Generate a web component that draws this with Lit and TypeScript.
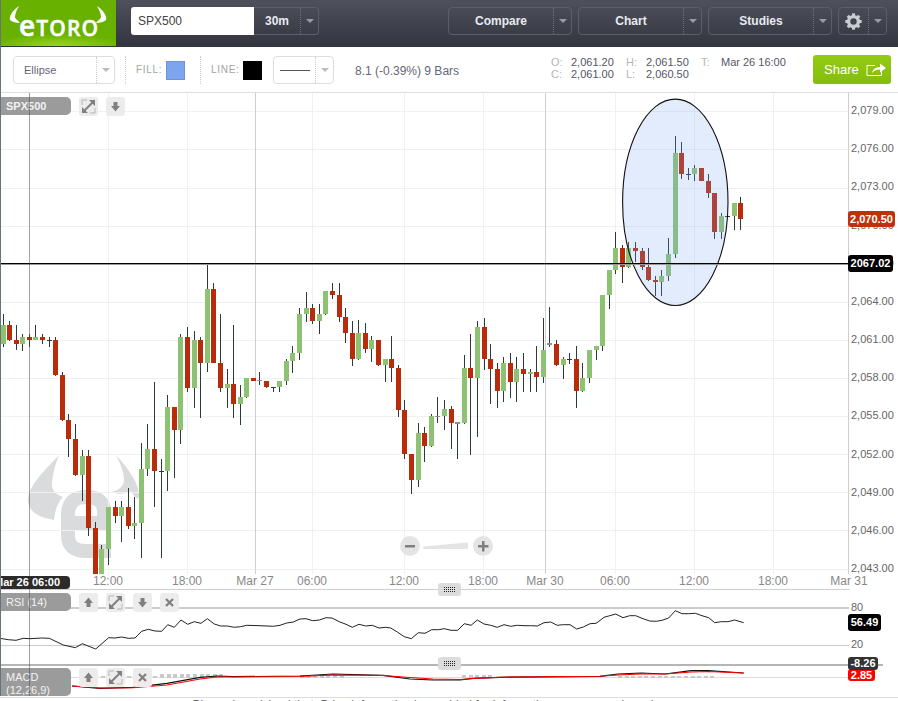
import { LitElement, html, css, svg } from "lit";
import { customElement } from "lit/decorators.js";

type C = [number, number, number, number, number, string];
const z7: C[] = [[10,163,260,195,251,"u"],[28,183,242,195,240,"d"],[49,195,269,240,251,"d"],[67,222,272,231,251,"u"],[88,222,261,231,240,"d"],[106,195,240,231,240,"u"],[127,222,252,231,240,"d"],[148,231,260,240,242,"n"],[166,231,347,240,345,"d"],[187,337,482,345,480,"d"],[205,462,590,480,537,"d"],[226,492,647,537,645,"d"],[247,569,722,588,645,"u"],[265,569,827,588,804,"d"],[286,786,942,804,942,"d"],[304,855,942,867,942,"u"],[325,741,915,741,867,"u"],[346,722,789,741,768,"d"],[364,722,846,741,768,"u"],[385,684,806,741,798,"d"],[403,711,837,789,798,"u"],[424,549,895,627,789,"u"],[442,492,648,567,627,"u"],[463,366,742,567,633,"d"],[484,597,895,633,635,"n"],[502,405,692,441,633,"u"],[523,441,654,441,510,"d"],[541,222,552,231,510,"u"],[562,201,395,231,384,"d"],[583,213,444,240,384,"u"],[601,231,474,240,309,"d"],[622,12,337,87,309,"u"],[640,69,310,87,309,"d"],[661,163,395,309,384,"d"],[682,327,444,372,384,"u"],[700,195,474,372,432,"d"],[721,375,495,411,432,"u"],[739,354,413,354,411,"u"],[760,354,364,354,363,"d"],[778,336,375,361,364,"g"],[799,363,384,363,381,"d"],[820,381,396,381,384,"n"],[838,363,396,363,381,"u"],[859,297,375,303,363,"u"],[877,258,338,279,303,"u"],[898,144,300,162,279,"u"]];
const z8: C[] = [[19,96,186,144,162,"u"],[37,132,192,144,183,"d"],[58,132,222,162,183,"u"],[76,93,165,93,162,"u"],[97,69,117,93,105,"d"],[118,69,186,105,171,"d"],[136,144,249,171,219,"d"],[157,183,318,219,297,"d"],[175,180,300,219,297,"u"],[196,189,279,219,267,"d"],[214,228,306,240,267,"u"],[235,240,318,240,315,"d"],[256,297,365,297,315,"u"],[274,228,365,297,324,"d"],[295,316,471,324,450,"d"],[313,420,597,450,582,"d"],[334,582,702,582,660,"d"],[355,489,681,519,660,"u"],[373,501,606,519,558,"d"],[394,462,560,468,558,"u"],[412,411,490,468,471,"g"],[433,420,510,447,468,"u"],[454,438,567,447,489,"d"],[472,486,597,486,492,"g"],[493,285,491,324,489,"u"],[511,222,585,324,354,"d"],[532,183,532,201,354,"u"],[553,175,330,201,297,"d"],[571,252,432,297,327,"d"],[592,309,444,327,393,"d"],[610,291,426,309,393,"u"],[631,280,414,309,366,"d"],[649,290,426,327,366,"u"],[670,279,396,327,342,"d"],[691,327,396,336,342,"u"],[709,259,396,336,351,"d"],[730,175,369,270,351,"u"],[748,141,261,250,254,"g"],[769,240,318,252,315,"d"],[790,291,357,297,315,"u"],[808,279,312,297,300,"n"],[829,259,444,297,393,"d"],[847,309,396,354,393,"u"],[868,270,369,270,354,"u"],[889,258,300,258,270,"u"],[907,105,273,105,258,"u"]];
const z6: C[] = [[28,540,657,540,615,"u"],[46,426,552,474,540,"u"],[67,465,579,474,531,"d"],[85,456,534,474,531,"u"],[106,456,516,474,483,"d"],[127,474,540,483,531,"d"],[145,474,573,531,570,"d"],[166,558,618,570,576,"d"],[184,540,618,558,576,"u"],[205,444,573,492,558,"u"],[226,138,504,189,492,"u"],[244,157,267,189,252,"d"],[265,234,270,252,255,"n"],[283,225,273,234,252,"u"],[304,234,273,234,273,"d"],[325,252,324,273,309,"d"],[343,309,447,309,426,"d"],[364,369,447,378,426,"u"],[382,375,381,378,381,"n"],[403,339,420,339,378,"u"],[421,321,420,339,387,"d"]];

const conv = (list: C[], ox: number, oy: number): C[] =>
  list.map(([x, a, b, c, d, t]) => [ox + x / 3, oy + a / 3, oy + b / 3, oy + c / 3, oy + d / 3, t] as C);
const candles: C[] = [...conv(z7, 0, 260), ...conv(z8, 300, 260), ...conv(z6, 600, 90)];
const bodyFill: Record<string, string> = { u: "#8dc273", d: "#b82c0c", n: "#2c3a3a", g: "#8a9090" };

const YS = Array.from({ length: 13 }, (_, i) => 111.3 + 38.1 * i);
const PRICES = ["2,079.00","2,076.00","2,073.00","2,070.00","2,067.00","2,064.00","2,061.00","2,058.00","2,055.00","2,052.00","2,049.00","2,046.00","2,043.00"];
const LIGHT_X = [108, 187, 312, 404, 483, 615, 694, 773];
const DARK_X = [255, 545];
const TIMES: [number, string][] = [[108,"12:00"],[187,"18:00"],[255,"Mar 27"],[312,"06:00"],[404,"12:00"],[483,"18:00"],[545,"Mar 30"],[615,"06:00"],[694,"12:00"],[773,"18:00"],[849,"Mar 31"]];

const pts = (list: number[][], ox: number, oy: number) => list.map(([x, y]) => `${(ox + x / 3).toFixed(1)},${(oy + y / 3).toFixed(1)}`).join(" ");
const rsi = [
  pts([[0,205],[25,209],[48,211],[70,205],[90,206],[125,204],[148,205],[190,225],[226,233],[247,221],[287,237],[326,203],[345,204],[365,201],[385,205],[405,204],[425,184],[445,178],[465,183],[485,184],[503,164],[523,172],[543,150],[563,163],[583,155],[603,160],[622,146],[643,162],[662,168],[682,168],[703,172],[722,170],[740,166],[780,167],[820,169],[840,166],[860,159],[880,156]], 0, 570),
  pts([[0,267],[18,266],[38,272],[58,270],[78,263],[96,264],[118,275],[138,283],[157,292],[177,283],[197,288],[217,286],[237,294],[257,292],[272,294],[293,307],[313,320],[334,326],[355,308],[375,310],[395,299],[415,299],[433,296],[453,301],[473,301],[493,281],[513,286],[532,270],[552,282],[572,286],[592,292],[612,284],[632,289],[652,286],[672,287],[692,287],[712,288],[732,278],[752,276],[772,286],[790,284],[810,284],[830,297],[850,291],[870,281],[888,280]], 300, 530),
  pts([[0,156],[18,142],[35,137],[53,132],[75,143],[95,137],[113,137],[135,146],[155,153],[175,154],[192,151],[212,144],[232,122],[252,131],[272,131],[292,130],[312,137],[332,143],[350,158],[370,155],[390,155],[410,150],[437,158]], 598, 570),
].join(" ");
const macdBlack = "72,686 100,688.3 133,687.3 167,683.3 200,677.3 217,676 233,676.7 300,676 333,674 383,675.3 410,679 433,680 460,680 473,678.3 500,677.3 600,676.3 618,674 641,673 665,674 691,670.7 708,670.7 743.7,673";
const macdRed = "72,686 100,688 133,687.8 167,685 200,679 217,677 300,676.5 333,675 383,675.5 410,677.5 433,679 460,679.5 473,678.5 500,677.2 600,676.3 618,675 641,674 665,674 691,672 708,671.5 743.7,673";
const hist: [number, number, number][] = [[94,160,1],[160,220,3],[300,345,2],[462,490,2],[618,716,1]];
const histBars = hist.flatMap(([a, b, h]) => {
  const out: [number, number][] = [];
  for (let x = a; x < b; x += 6.6) out.push([Math.round(x), h]);
  return out;
});

const upIcon = svg`<path d="M9.5 4.5 14 10H11.5V14H7.5V10H5Z" fill="#808080"/>`;
const downIcon = svg`<path d="M7.5 5H11.5V9H14L9.5 14.5 5 9H7.5Z" fill="#808080"/>`;
const closeIcon = svg`<path d="M6 6 13 13M13 6 6 13" stroke="#808080" stroke-width="2.2" fill="none"/>`;
const expandIcon = svg`<path d="M4 15 15 4" stroke="#808080" stroke-width="2" fill="none"/><path d="M10 3H16V9ZM3 10V16H9Z" fill="#808080"/><path d="M3 8V3H8M16 11V16H11" stroke="#b5b5b5" stroke-width="1" fill="none"/>`;
const ic = (p: unknown) => html`<span class="ib"><svg viewBox="0 0 19 19" width="19" height="19">${p}</svg></span>`;

const gear = svg`<g transform="translate(8.5 8.5)" stroke="#c9cbd1" fill="none">
  <circle r="5" stroke-width="3.2"/>
  ${[0, 45, 90, 135].map((a) => svg`<path d="M0 -8.2V8.2" stroke-width="3" transform="rotate(${a})"/>`)}
  <circle r="3.2" fill="#41444e" stroke="none"/>
</g>`;

const gripDots = svg`<svg width="12" height="6" viewBox="0 0 12 6" shape-rendering="crispEdges">
  ${[0, 2, 4].flatMap((y) => [0, 2, 4, 6, 8, 10].map((x) => svg`<rect x="${x}" y="${y}" width="1" height="1" fill="#222"/>`))}
</svg>`;

@customElement("app-root")
export class AppRoot extends LitElement {
  static styles = css`
    :host { display: block; position: relative; width: 898px; height: 701px; overflow: hidden; background: #fff; font-family: "Liberation Sans", Arial, sans-serif; }
    .strip { position: absolute; left: 0; top: 0; width: 1px; height: 696px; background: #66757b; z-index: 9; }
    .top { height: 47px; display: flex; background: linear-gradient(#4e515c, #32353e); box-sizing: border-box; }
    .logo { width: 116px; height: 46px; background: radial-gradient(ellipse 70px 12px at 50% 100%, #9ad61c, transparent), #68b100; flex: none; }
    .logo svg { display: block; }
    .bar { display: flex; flex: 1; padding-top: 7px; height: 28px; }
    .sym { margin-left: 15px; width: 123px; height: 28px; box-sizing: border-box; background: #fff; border-radius: 3px 0 0 3px; font-size: 12px; color: #444; line-height: 28px; padding-left: 7px; }
    .hb { height: 28px; box-sizing: border-box; border: 1px solid #5c5f6a; border-radius: 4px; display: flex; color: #e8eaf0; font-weight: bold; font-size: 12px; line-height: 26px; text-align: center; }
    .hb .lbl { flex: 1; }
    .hb .ar { width: 17px; border-left: 1px dotted #6d7079; display: flex; align-items: center; justify-content: center; flex: none; }
    .tri { width: 0; height: 0; border-left: 4px solid transparent; border-right: 4px solid transparent; border-top: 4px solid #9a9ca5; }
    .tf { width: 65px; border-left: none; border-radius: 0 4px 4px 0; }
    .big { width: 124px; margin-left: 6px; }
    .compare { margin-left: 129px; }
    .set { width: 49px; margin-left: 6px; }
    .set .lbl { display: flex; align-items: center; justify-content: center; }
    .tools { height: 45px; border-bottom: 1px solid #ddd; display: flex; align-items: center; color: #999; font-size: 11px; padding-bottom: 0; box-sizing: content-box; }
    .sel { height: 28px; box-sizing: border-box; border: 1px solid #ddd; border-radius: 4px; display: flex; color: #667; font-size: 11px; line-height: 26px; margin-top: 1px; }
    .sel .lbl { flex: 1; padding-left: 10px; }
    .sel .ar { width: 17px; border-left: 1px dotted #ccc; display: flex; align-items: center; justify-content: center; flex: none; }
    .sel .tri { border-left-width: 4.5px; border-right-width: 4.5px; border-top-color: #bbb; }
    .s1 { width: 102px; margin-left: 13px; }
    .dsep { width: 0; height: 28px; border-left: 1px dotted #ccc; margin-top: 1px; }
    .d1 { margin-left: 10px; }
    .d2 { margin-left: 15px; }
    .cap { letter-spacing: .7px; color: #a3a3a3; font-size: 10px; margin-top: -1px; }
    .cfill { margin-left: 10px; width: 30px; }
    .cline { margin-left: 10px; width: 32px; }
    .swatch { width: 19px; height: 19px; box-sizing: border-box; margin-top: 1px; }
    .blue { background: #7ca4ef; border: 1px solid #6d93d6; }
    .black { background: #000; }
    .s2 { width: 61px; margin-left: 11px; }
    .s2 .lbl { padding: 0; display: flex; align-items: center; justify-content: center; }
    .ln { width: 30px; height: 1px; background: #555; }
    .stat { margin-left: 21px; width: 196px; font-size: 12px; color: #667; margin-top: 2px; flex: none; }
    .ohlc { display: grid; grid-template-columns: 20px 55px 20px 55px 20px 80px; grid-auto-rows: 12px; line-height: 12px; font-size: 11px; color: #556; width: 250px; flex: none; margin-top: -3px; }
    .ohlc i { font-style: normal; color: #b5b5b5; }
    .share { margin-left: 12px; width: 78px; height: 29px; box-sizing: border-box; border-radius: 3px; background: linear-gradient(#93cb14, #84bd0c); color: #fff; font-size: 13px; display: flex; align-items: center; padding-left: 11px; gap: 7px; margin-top: -1px; flex: none; }
    .panes { position: relative; }
    .pane { position: relative; display: block; }
    .pane svg.plot { display: block; }
    .cross { position: absolute; left: 29px; top: 0; width: 1px; height: 603px; background: rgba(70,70,70,.5); z-index: 4; }
    .legend { position: absolute; left: 0; display: flex; gap: 8px; z-index: 3; }
    .lt-main { top: 4px; }
    .lt-rsi { top: 3px; }
    .lt-macd { top: 4px; }
    .pill { width: 71px; height: 18px; box-sizing: border-box; background: #9b9b9b; color: #f2f2f2; border-radius: 0 5px 5px 0; font-size: 11px; line-height: 18px; padding-left: 6px; flex: none; }
    .pill.b { font-weight: bold; }
    .pill.tall { height: 28px; line-height: 12.5px; padding-top: 3px; }
    .ib { width: 19px; height: 19px; background: #ececec; border-radius: 3px; flex: none; display: block; }
    .ib svg { display: block; }
    .time { position: absolute; left: 0; top: 483px; width: 70px; height: 13px; background: #2b2b2b; border-radius: 0 4px 4px 0; color: #fff; font-weight: bold; font-size: 11px; line-height: 13px; white-space: nowrap; overflow: hidden; z-index: 5; }
    .time span { display: block; margin-left: -6px; }
    .tag { position: absolute; left: 848px; color: #fff; font-weight: bold; font-size: 11px; text-align: center; border-radius: 3px; box-sizing: border-box; z-index: 5; }
    .t-last { top: 118px; width: 47px; height: 16px; line-height: 16px; background: #c0300c; }
    .t-line { top: 162px; width: 45px; height: 17px; line-height: 17px; background: #000; }
    .t-rsi { top: 24px; width: 33px; height: 17px; line-height: 17px; background: #000; }
    .t-sig { top: -7px; width: 30px; height: 13px; line-height: 13px; background: #333; z-index: 6; }
    .t-macd { top: 5px; width: 27px; height: 12px; line-height: 12px; background: #f00; }
    .grip { position: absolute; left: 438px; top: -7px; width: 23px; height: 13px; background: #dcdcdc; border-radius: 3px; display: flex; align-items: center; justify-content: center; z-index: 4; }
    .grip svg { display: block; }
    .foot { border-top: 1px solid #ddd; text-align: center; font-size: 12px; line-height: 14px; color: #666; padding-top: 0; white-space: nowrap; }
  `;

  private hb(label: string, cls: string) {
    return html`<div class="hb ${cls}"><div class="lbl">${label}</div><div class="ar"><div class="tri"></div></div></div>`;
  }

  private mainPlot() {
    return svg`<svg class="plot" width="898" height="497" viewBox="0 93 898 497">
      <g fill="none" stroke="#d9dbdc" stroke-width="14">
        <path d="M75 523H104V512Q104 497 86 497Q68 497 68 515V535Q68 551 86 551H111"/>
      </g>
      <g fill="#d9dbdc">
        <path d="M59 455C46 469 28 486 28 500C28 510 36 517 54 520C55 510 58 502 63 497C58 495 52 492 52 485C52 477 55 465 59 455Z"/>
        <path d="M116 455C129 469 139 484 139 495C139 505 130 490 131 491C126 494 118 495 112 492C118 490 124 487 124 480C124 472 120 463 116 455Z"/>
      </g>
      <g fill="#f0f0f0" shape-rendering="crispEdges">
        ${YS.map((y) => svg`<rect x="0" y="${Math.round(y)}" width="848" height="1"/>`)}
        ${LIGHT_X.map((x) => svg`<rect x="${x}" y="93" width="1" height="481"/>`)}
      </g>
      <g fill="#cfcfcf" shape-rendering="crispEdges">
        ${DARK_X.map((x) => svg`<rect x="${x}" y="93" width="1" height="481"/>`)}
        <rect x="848" y="93" width="1" height="481"/>
        <rect x="0" y="589" width="850" height="1"/>
      </g>
      <g shape-rendering="crispEdges">
        ${candles.map(([x, wt, wb, bt, bb, t]) => {
          const px = Math.floor(x);
          const top = Math.round(bt);
          const bot = Math.min(Math.round(bb), 574);
          const wbot = Math.min(Math.round(wb), 574);
          return svg`<rect x="${px}" y="${Math.round(wt)}" width="1" height="${Math.max(wbot - Math.round(wt), 1)}" fill="#2c3a3a"/>
            <rect x="${px - 2}" y="${top}" width="5" height="${Math.max(bot - top, 1)}" fill="${bodyFill[t]}"/>`;
        })}
      </g>
      <ellipse cx="675.3" cy="202.3" rx="52.7" ry="103.2" fill="#7ca4ef" fill-opacity=".21" stroke="#111" stroke-width="1.1"/>
      <g shape-rendering="crispEdges">
        <rect x="0" y="264" width="848" height="1" fill="#999"/>
        <rect x="0" y="263" width="848" height="1" fill="#000"/>
      </g>
      <g fill="#e4e4e4">
        <circle cx="410" cy="546" r="10"/><circle cx="483" cy="546" r="10"/>
        <path d="M424 546.5 467 542.5Q468 542.5 468 543.5V548Q468 549 467 549H424Q423 549 423 548V547.5Q423 546.6 424 546.5Z"/>
      </g>
      <path d="M405 545H415V547.5H405ZM482 541H484.5V545H488.5V547.5H484.5V551.5H482V547.5H478V545H482Z" fill="#7f7f7f"/>
      <g font-family="Liberation Sans, Arial, sans-serif" font-size="11" fill="#666">
        ${PRICES.map((p, i) => svg`<text x="851" y="${114 + 38.17 * i}">${p}</text>`)}
      </g>
      <g font-family="Liberation Sans, Arial, sans-serif" font-size="12" fill="#888" text-anchor="middle">
        ${TIMES.map(([x, t]) => svg`<text x="${x}" y="585">${t}</text>`)}
      </g>
    </svg>`;
  }

  private rsiPlot() {
    return svg`<svg class="plot" width="898" height="74" viewBox="0 590 898 74">
      <g shape-rendering="crispEdges">
        <rect x="0" y="607" width="849" height="2" fill="#ccc"/>
        <rect x="0" y="645" width="849" height="1" fill="#ccc"/>
      </g>
      <polyline points="${rsi}" fill="none" stroke="#222" stroke-width="1"/>
      <g font-family="Liberation Sans, Arial, sans-serif" font-size="11" fill="#666">
        <text x="851" y="611">80</text><text x="851" y="648">20</text>
      </g>
    </svg>`;
  }

  private macdPlot() {
    return svg`<svg class="plot" width="898" height="33" viewBox="0 664 898 33">
      <g shape-rendering="crispEdges">
        <rect x="0" y="664" width="883" height="2" fill="#b5b5b5"/>
        <rect x="0" y="677" width="849" height="1" fill="#ddd"/>
        ${histBars.map(([x, h]) => svg`<rect x="${x}" y="${677 - h}" width="4" height="${h + 1}" fill="#c9c9c9"/>`)}
      </g>
      <polyline points="${macdBlack}" fill="none" stroke="#111" stroke-width="1.2"/>
      <polyline points="${macdRed}" fill="none" stroke="#f00" stroke-width="1.1"/>
    </svg>`;
  }

  render() {
    return html`
      <div class="strip"></div>
      <header class="top">
        <div class="logo">
          <svg width="116" height="46" viewBox="0 0 116 46">
            <path d="M19 6C12 11 9 16 10 20C12 22 16 23 20 23C18 20 15 19 15 17C15 13 17 10 19 6Z" fill="#fff"/>
            <path d="M97 6C104 11 107 16 106 20C104 22 100 23 96 23C98 20 101 19 101 17C101 13 99 10 97 6Z" fill="#fff"/>
            <text x="19" y="36" fill="#fff" stroke="#fff" stroke-width=".5" font-family="Open Sans, sans-serif" font-weight="600" textLength="79" lengthAdjust="spacing"><tspan font-size="28">e</tspan><tspan font-size="21">TORO</tspan></text>
          </svg>
        </div>
        <div class="bar">
          <div class="sym">SPX500</div>
          ${this.hb("30m", "tf")}
          ${this.hb("Compare", "big compare")}
          ${this.hb("Chart", "big")}
          ${this.hb("Studies", "big")}
          <div class="hb set">
            <div class="lbl"><svg width="17" height="17" viewBox="0 0 17 17">${gear}</svg></div>
            <div class="ar"><div class="tri"></div></div>
          </div>
        </div>
      </header>
      <div class="tools">
        <div class="sel s1"><div class="lbl">Ellipse</div><div class="ar"><div class="tri"></div></div></div>
        <div class="dsep d1"></div>
        <div class="cap cfill">FILL:</div>
        <div class="swatch blue"></div>
        <div class="dsep d2"></div>
        <div class="cap cline">LINE:</div>
        <div class="swatch black"></div>
        <div class="sel s2"><div class="lbl"><div class="ln"></div></div><div class="ar"><div class="tri"></div></div></div>
        <div class="stat">8.1 (-0.39%) 9 Bars</div>
        <div class="ohlc">
          <i>O:</i><span>2,061.20</span><i>H:</i><span>2,061.50</span><i>T:</i><span>Mar 26 16:00</span>
          <i>C:</i><span>2,061.00</span><i>L:</i><span>2,060.50</span>
        </div>
        <div class="share">Share
          <svg width="24" height="14" viewBox="0 0 24 14">
            <path d="M9 3.5H1V13.5H15.5V9" fill="none" stroke="#fff" stroke-width="1"/>
            <path d="M6 11C7 7 10 5 14 5V1.5L20 6L14 10.5V7.5C11 7.5 8 8.5 6 11Z" fill="#fff"/>
          </svg>
        </div>
      </div>
      <div class="panes">
        <div class="cross"></div>
        <section class="pane">
          ${this.mainPlot()}
          <div class="legend lt-main"><div class="pill b">SPX500</div>${ic(expandIcon)}${ic(downIcon)}</div>
          <div class="time"><span>Mar 26 06:00</span></div>
          <div class="tag t-last">2,070.50</div>
          <div class="tag t-line">2067.02</div>
        </section>
        <section class="pane">
          ${this.rsiPlot()}
          <div class="legend lt-rsi"><div class="pill">RSI (14)</div>${ic(upIcon)}${ic(expandIcon)}${ic(downIcon)}${ic(closeIcon)}</div>
          <div class="grip">${gripDots}</div>
          <div class="tag t-rsi">56.49</div>
        </section>
        <section class="pane">
          ${this.macdPlot()}
          <div class="legend lt-macd"><div class="pill tall">MACD<br />(12,26,9)</div>${ic(upIcon)}${ic(expandIcon)}${ic(closeIcon)}</div>
          <div class="grip">${gripDots}</div>
          <div class="tag t-sig">-8.26</div>
          <div class="tag t-macd">2.85</div>
        </section>
      </div>
      <div class="foot">Please be advised that: Price information is provided for information purposes only and may vary</div>
    `;
  }
}
